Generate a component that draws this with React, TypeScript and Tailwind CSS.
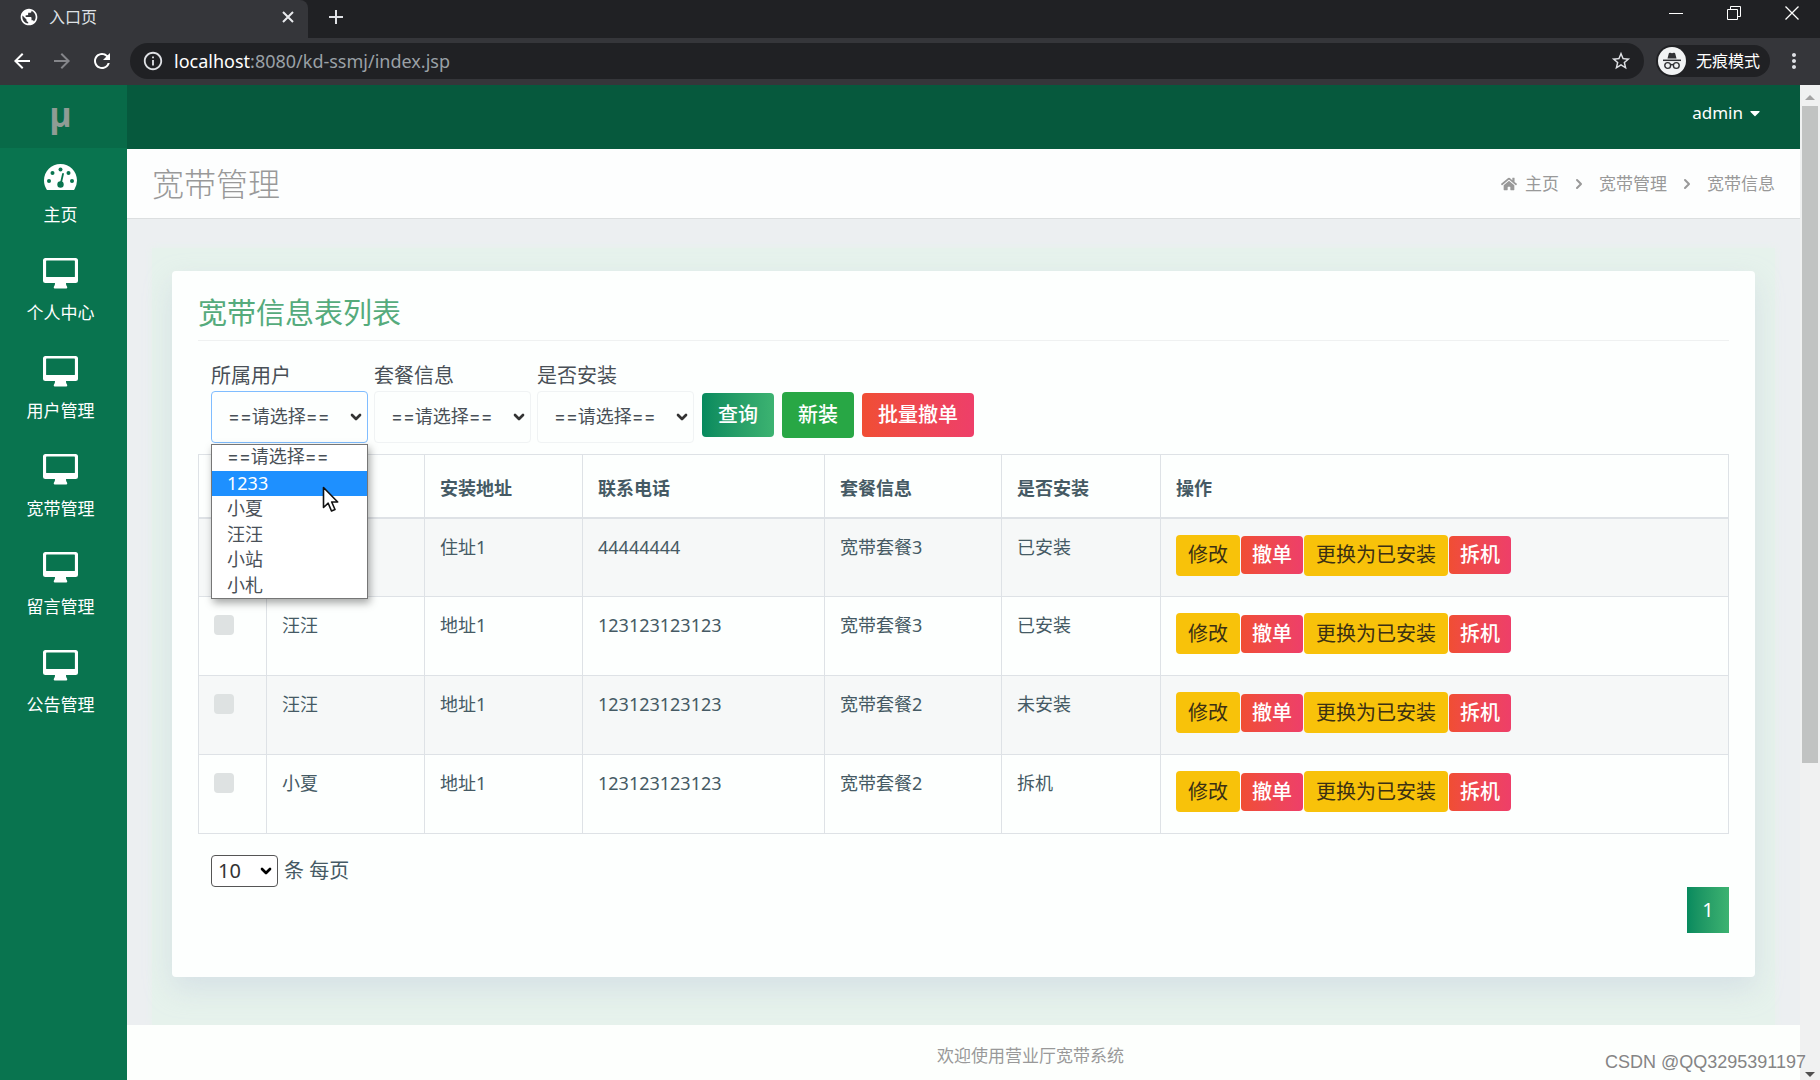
import React from "react";
import {
  MdAdd,
  MdArrowBack,
  MdArrowForward,
  MdClose,
  MdInfoOutline,
  MdMoreVert,
  MdPublic,
  MdRefresh,
  MdStarBorder,
} from "react-icons/md";
import { FaCaretDown, FaHome } from "react-icons/fa";
import { ChevronDown, ChevronRight } from "lucide-react";

const menu = ["个人中心", "用户管理", "宽带管理", "留言管理", "公告管理"];

const rows = [
  { user: "小站", address: "住址1", phone: "44444444", plan: "宽带套餐3", state: "已安装" },
  { user: "汪汪", address: "地址1", phone: "123123123123", plan: "宽带套餐3", state: "已安装" },
  { user: "汪汪", address: "地址1", phone: "123123123123", plan: "宽带套餐2", state: "未安装" },
  { user: "小夏", address: "地址1", phone: "123123123123", plan: "宽带套餐2", state: "拆机" },
];

const users = ["==请选择==", "1233", "小夏", "汪汪", "小站", "小札"];

function GaugeIcon() {
  return (
    <svg viewBox="0 0 33 26" className="h-[26px] w-[33px]" aria-hidden="true">
      <path
        d="M16.500 0C7.400 0 0 7.400 0 16.500c0 3.300 1 6.300 2.600 8.900.3.400.7.600 1.200.600h25.400c.5 0 .9-.2 1.200-.6A16.400 16.400 0 0 0 33 16.500C33 7.400 25.600 0 16.500 0z"
        fill="#fff"
      />
      <g fill="#09744f">
        <circle cx="5" cy="17" r="2" />
        <circle cx="8.500" cy="9" r="2" />
        <circle cx="16.500" cy="5.500" r="2" />
        <circle cx="24.500" cy="9" r="2" />
        <circle cx="28" cy="17" r="2" />
        <circle cx="16.500" cy="20.500" r="3.200" />
      </g>
      <path d="M16.700 20L19 10" stroke="#09744f" strokeWidth="1.800" strokeLinecap="round" />
    </svg>
  );
}

function MonitorIcon() {
  return (
    <svg viewBox="0 0 35 31" className="h-[31px] w-[35px]" fill="#fff" aria-hidden="true">
      <path
        fillRule="evenodd"
        d="M2.500 0h30A2.500 2.500 0 0 1 35 2.500v20a2.500 2.500 0 0 1-2.500 2.500H23c0 1.800.4 2.600.9 3.300.5.800.6 2.200-.6 2.200H11.700c-1.200 0-1.100-1.400-.6-2.200.5-.7.900-1.500.9-3.300H2.500A2.500 2.500 0 0 1 0 22.500v-20A2.500 2.500 0 0 1 2.500 0zM3.700 2.600a.6.600 0 0 0-.6.600v15.300c0 .3.300.6.6.6h27.600c.3 0 .6-.3.6-.6V3.200a.6.600 0 0 0-.6-.6z"
      />
    </svg>
  );
}

function IncognitoIcon() {
  return (
    <svg viewBox="0 0 28 28" className="h-7 w-7" aria-hidden="true">
      <circle cx="14" cy="14" r="14" fill="#f1f3f4" />
      <path d="M9.500 11.500l1.300-5c.2-.7.800-1 1.400-.8l1.800.5 1.800-.5c.6-.2 1.200.1 1.400.8l1.300 5z" fill="#303134" />
      <path d="M5 13.300h18" stroke="#303134" strokeWidth="1.500" />
      <g fill="none" stroke="#303134" strokeWidth="1.400">
        <circle cx="9.700" cy="18.500" r="2.900" />
        <circle cx="18.300" cy="18.500" r="2.900" />
        <path d="M12.600 18c.9-.6 1.900-.6 2.800 0" />
      </g>
    </svg>
  );
}

function Browser() {
  return (
    <header className="shrink-0 bg-[#35363a] text-[#dfe1e5]">
      <div className="flex h-[38px] bg-[#202124]">
        <div className="flex w-[308px] items-center gap-2.5 rounded-tr-lg bg-[#35363a] pr-3 pb-1 pl-[19px]">
          <MdPublic className="h-5 w-5 text-white" />
          <span className="flex-1 text-base leading-5">入口页</span>
          <button aria-label="关闭标签页">
            <svg viewBox="0 0 16 16" className="h-4 w-4" stroke="#e8eaed" strokeWidth="2">
              <path d="M3 3l10 10M13 3L3 13" />
            </svg>
          </button>
        </div>
        <button aria-label="新标签页" className="ml-4 pb-1">
          <MdAdd className="h-6 w-6" />
        </button>
        <div className="ml-auto flex items-center gap-11 pr-[21px] pb-3">
          <button aria-label="最小化">
            <svg viewBox="0 0 14 14" className="h-[14px] w-[14px]" stroke="#fff" fill="none">
              <path d="M0 7.500h14" />
            </svg>
          </button>
          <button aria-label="还原">
            <svg viewBox="0 0 14 14" className="h-[14px] w-[14px]" stroke="#fff" fill="none">
              <path d="M.5 3.500h10v10h-10zM3.500 3V.500h10v10H11" />
            </svg>
          </button>
          <button aria-label="关闭">
            <svg viewBox="0 0 14 14" className="h-[14px] w-[14px]" stroke="#fff" fill="none">
              <path d="M.5.500l13 13M13.500.500l-13 13" strokeWidth="1.300" />
            </svg>
          </button>
        </div>
      </div>
      <div className="flex h-[47px] items-center pr-3.5 pb-0.5 pl-2.5">
        <button aria-label="后退" className="mr-4 text-white"><MdArrowBack className="h-6 w-6" /></button>
        <button aria-label="前进" className="mr-4 text-[#85868a]"><MdArrowForward className="h-6 w-6" /></button>
        <button aria-label="刷新" className="mr-4 text-white"><MdRefresh className="h-6 w-6" /></button>
        <div className="flex h-9 flex-1 items-center rounded-full bg-[#202124] px-3">
          <MdInfoOutline className="mr-2.5 h-[22px] w-[22px]" />
          <span className="text-lg leading-6 text-[#9aa0a6]">
            <span className="text-white">localhost</span>:8080/kd-ssmj/index.jsp
          </span>
          <button aria-label="收藏" className="ml-auto"><MdStarBorder className="h-[22px] w-[22px]" /></button>
        </div>
        <div className="mr-3 ml-3 flex h-8 items-center gap-2.5 rounded-full bg-[#202124] pr-2.5 pl-0.5 text-base text-white">
          <IncognitoIcon />
          无痕模式
        </div>
        <button aria-label="更多"><MdMoreVert className="h-6 w-6" /></button>
      </div>
    </header>
  );
}

function Sidebar() {
  return (
    <aside className="w-[127px] shrink-0 bg-[#09744f] text-[17px] text-white">
      <div className="flex h-[63px] items-center justify-center bg-[#086a48] pr-1.5 pb-1 font-['Open_Sans',sans-serif] text-[34px] font-bold text-[#8f9c95]">
        μ
      </div>
      <nav className="flex flex-col pt-px pr-1.5">
        <a href="#home" className="flex h-[98px] flex-col items-center pt-3">
          <span className="flex h-8 items-center"><GaugeIcon /></span>
          <span className="mt-2.5 leading-6">主页</span>
        </a>
        {menu.map((m) => (
          <a key={m} href={"#" + m} className="flex h-[98px] flex-col items-center pt-[11px]">
            <MonitorIcon />
            <span className="mt-3 leading-6">{m}</span>
          </a>
        ))}
      </nav>
    </aside>
  );
}

function FilterSelect({ id, label, open }: { id: string; label: string; open?: boolean }) {
  return (
    <div className="relative w-[157px]">
      <label htmlFor={id} className="block text-xl leading-[30px]">{label}</label>
      <select
        id={id}
        className={
          "block h-[52px] w-full appearance-none rounded-sm border bg-transparent px-4 font-['Inter','Noto_Sans_CJK_SC',sans-serif] text-lg text-[#495057] outline-none " +
          (open ? "border-[#80bdff]" : "border-[#f0f3f4]")
        }
      >
        <option>==请选择==</option>
      </select>
      <ChevronDown className="pointer-events-none absolute right-1 bottom-[18px] h-4 w-4 text-[#333]" strokeWidth={4} />
      {open && (
        <ul
          role="listbox"
          aria-label={label}
          className="absolute top-full left-0 z-10 mt-px grid h-[155px] w-full grid-rows-6 border border-[#767676] bg-white text-lg leading-6 text-[#495057] shadow-[2px_4px_8px_rgba(0,0,0,0.35)]"
        >
          {users.map((u, i) => (
            <li
              key={u}
              role="option"
              aria-selected={i === 1}
              className={
                "px-[15px] " +
                (i === 1 ? "bg-[#1e90ff] text-white" : i === 0 ? "font-['Inter','Noto_Sans_CJK_SC',sans-serif]" : "")
              }
            >
              {u}
            </li>
          ))}
        </ul>
      )}
      {open && (
        <svg viewBox="0 0 18 27" className="pointer-events-none absolute top-[125px] left-[111px] z-20 h-[27px] w-[18px]" aria-hidden="true">
          <path d="M1.500 1.500v20l4.700-4.300 3.300 7.800 3.500-1.500-3.300-7.500h6z" fill="#fff" stroke="#111" strokeWidth="1.600" strokeLinejoin="round" />
        </svg>
      )}
    </div>
  );
}

const th = "border border-[#dee2e6] border-b-2 px-[15px] pt-[18px] pb-3.5 text-left font-bold leading-7";
const td = "border border-[#dee2e6] px-[15px] pt-4 align-top leading-6";
const warn = "h-[41px] rounded-sm bg-[#f8c20a] px-3 text-[#3b3013]";
const danger = "h-[38px] rounded-sm bg-linear-to-r from-[#f04e33] to-[#ee3f69] px-[11px] font-medium text-white";

function DataTable() {
  return (
    <table className="mt-[11px] w-full table-fixed border-collapse text-lg text-[#455a64]">
      <colgroup>
        <col className="w-[68px]" />
        <col className="w-[158px]" />
        <col className="w-[158px]" />
        <col className="w-[242px]" />
        <col className="w-[177px]" />
        <col className="w-[159px]" />
        <col />
      </colgroup>
      <thead>
        <tr className="h-[63px]">
          <th className={th}>
            <input type="checkbox" aria-label="全选" className="block h-5 w-5 appearance-none rounded-sm bg-[#dee2e4]" />
          </th>
          <th className={th}>所属用户</th>
          <th className={th}>安装地址</th>
          <th className={th}>联系电话</th>
          <th className={th}>套餐信息</th>
          <th className={th}>是否安装</th>
          <th className={th}>操作</th>
        </tr>
      </thead>
      <tbody>
        {rows.map((r, i) => (
          <tr key={i} className="h-[79px] odd:bg-[#f6f8f8]">
            <td className={td}>
              <input type="checkbox" aria-label={"选择" + r.user} className="mt-0.5 block h-5 w-5 appearance-none rounded-sm bg-[#dee2e2]" />
            </td>
            <td className={td}>{r.user}</td>
            <td className={td}>{r.address}</td>
            <td className={td}>{r.phone}</td>
            <td className={td}>{r.plan}</td>
            <td className={td}>{r.state}</td>
            <td className={td}>
              <div className="flex items-center gap-px text-xl">
                <button className={warn}>修改</button>
                <button className={danger}>撤单</button>
                <button className={warn}>更换为已安装</button>
                <button className={danger}>拆机</button>
              </div>
            </td>
          </tr>
        ))}
      </tbody>
    </table>
  );
}

function Card() {
  return (
    <section className="flex-1 rounded-sm bg-[#fdfffe] px-[26px] pt-[25px] shadow-[0_12px_28px_rgba(190,200,220,0.4)]">
      <h2 className="border-b border-[#eff1f1] pb-2.5 text-[29px] leading-[34px] text-[#55ab7c]">宽带信息表列表</h2>
      <form className="mt-5 flex items-end gap-1.5 pl-[13px] text-[#495057]">
        <FilterSelect id="user" label="所属用户" open />
        <FilterSelect id="plan" label="套餐信息" />
        <FilterSelect id="installed" label="是否安装" />
        <div className="ml-0.5 flex h-[52px] items-center gap-2 pb-1 text-xl text-white">
          <button type="button" className="h-11 rounded-sm bg-linear-to-r from-[#068a5e] to-[#3cb371] px-4 font-medium">查询</button>
          <button type="button" className="h-[46px] rounded bg-[#28a745] px-4 font-medium">新装</button>
          <button type="button" className="h-11 rounded-sm bg-linear-to-r from-[#f04e33] to-[#ee3f69] px-4 font-medium">批量撤单</button>
        </div>
      </form>
      <DataTable />
      <div className="mt-[21px] flex items-center gap-1.5 pl-[13px] text-xl leading-8 text-[#455a64]">
        <div className="relative">
          <select id="size" className="block h-8 w-[67px] appearance-none rounded-sm border border-[#555] bg-white px-1.5 text-xl leading-7 text-[#333]">
            <option>10</option>
          </select>
          <ChevronDown className="pointer-events-none absolute top-2 right-1 h-4 w-4 text-black" strokeWidth={4} />
        </div>
        <label htmlFor="size">条 每页</label>
      </div>
      <div className="flex justify-end">
        <button className="h-[46px] w-[42px] bg-linear-to-r from-[#068a5e] to-[#3cb371] text-xl text-white">1</button>
      </div>
    </section>
  );
}

function Scrollbar() {
  return (
    <div className="flex w-5 shrink-0 flex-col items-center bg-[#f0f1f1]">
      <svg viewBox="0 0 10 5" className="mt-2.5 h-[5px] w-[10px]"><path d="M0 5l5-5 5 5z" fill="#a3a3a3" /></svg>
      <div className="mt-1.5 h-[66%] w-4 bg-[#c1c3c2]" />
      <svg viewBox="0 0 10 5" className="mt-auto mb-[3px] h-[5px] w-[10px]"><path d="M0 0l5 5 5-5z" fill="#505050" /></svg>
    </div>
  );
}

export default function App() {
  return (
    <div className="relative flex h-screen flex-col overflow-hidden bg-[#eceff1] font-['Noto_Sans','Noto_Sans_CJK_SC',sans-serif]">
      <Browser />
      <div className="flex min-h-0 flex-1">
        <Sidebar />
        <div className="flex min-w-0 flex-1 flex-col">
          <div className="flex h-16 shrink-0 items-center justify-end bg-[#06593d] pr-[39px] pb-2 text-[17px] text-white">
            <button className="flex items-center gap-1.5">
              admin <FaCaretDown className="h-4 w-3" />
            </button>
          </div>
          <div className="flex h-[70px] shrink-0 items-center justify-between border-b border-[#dcdfe0] bg-[#fdfefe] pr-[25px] pl-[25px] text-[#999]">
            <h1 className="text-[32px] leading-10 font-light">宽带管理</h1>
            <nav aria-label="面包屑" className="flex items-center text-[17px]">
              <FaHome className="mr-2 h-4 w-4" />
              <a href="#home">主页</a>
              <ChevronRight className="mx-3 h-4 w-4" strokeWidth={3} />
              <a href="#broadband">宽带管理</a>
              <ChevronRight className="mx-3 h-4 w-4" strokeWidth={3} />
              <span>宽带信息</span>
            </nav>
          </div>
          <main className="mt-[29px] mr-[25px] ml-[25px] flex flex-1 bg-[#e6f2ec] px-5 pt-[23px] pb-12 shadow-[0_0_8px_#e6f2ec]">
            <Card />
          </main>
          <footer className="relative flex h-[55px] shrink-0 items-center justify-center bg-[#fdfffd] pt-1.5 pl-[134px] text-[17px] text-[#999]">
            欢迎使用营业厅宽带系统
          </footer>
        </div>
        <Scrollbar />
      </div>
      <div className="absolute right-3.5 bottom-1.5 font-['Liberation_Sans',sans-serif] text-lg leading-6 text-[#858585] [text-shadow:0_0_2px_#fff]">
        CSDN @QQ3295391197
      </div>
    </div>
  );
}
